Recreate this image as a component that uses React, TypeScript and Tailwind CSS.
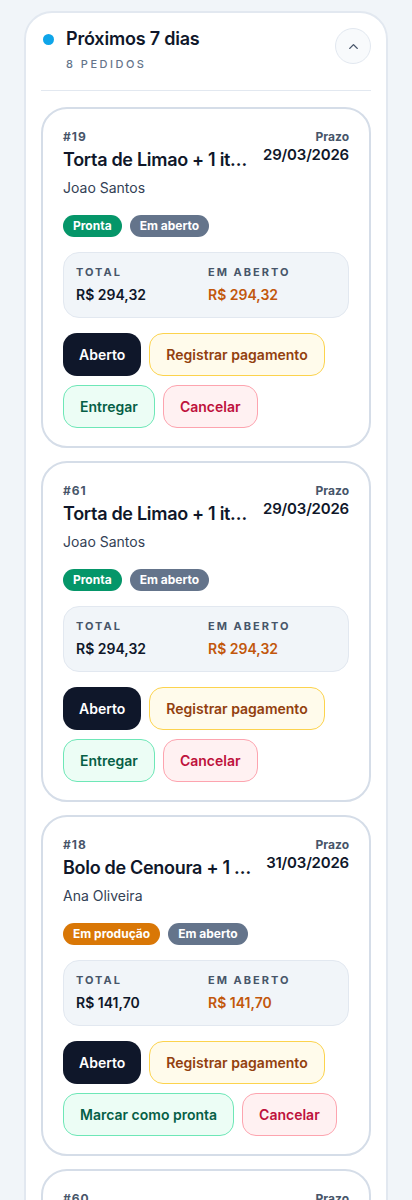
import { ChevronUp } from 'lucide-react'

type Pedido = {
  id: number
  titulo: string
  cliente: string
  prazo: string
  status: 'Pronta' | 'Em produção'
  total: string
  emAberto: string
}

const pedidos: Pedido[] = [
  { id: 19, titulo: 'Torta de Limao + 1 item', cliente: 'Joao Santos', prazo: '29/03/2026', status: 'Pronta', total: 'R$ 294,32', emAberto: 'R$ 294,32' },
  { id: 61, titulo: 'Torta de Limao + 1 item', cliente: 'Joao Santos', prazo: '29/03/2026', status: 'Pronta', total: 'R$ 294,32', emAberto: 'R$ 294,32' },
  { id: 18, titulo: 'Bolo de Cenoura + 1 item', cliente: 'Ana Oliveira', prazo: '31/03/2026', status: 'Em produção', total: 'R$ 141,70', emAberto: 'R$ 141,70' },
  { id: 60, titulo: 'Bolo de Chocolate + 2 itens', cliente: 'Maria Souza', prazo: '01/04/2026', status: 'Em produção', total: 'R$ 98,00', emAberto: 'R$ 98,00' },
]

function PedidoCard({ pedido }: { pedido: Pedido }) {
  const pronta = pedido.status === 'Pronta'

  return (
    <div className="rounded-[26px] border-2 border-[#d5dde8] bg-white px-5 pt-5 pb-[18px]">
      {/* Cabecalho */}
      <div className="flex items-start gap-3">
        <div className="min-w-0 flex-1">
          <div className="text-[12px] font-bold leading-4 tracking-[1px] text-[#475569]">#{pedido.id}</div>
          <div className="mt-[3px] truncate text-[18px] font-semibold leading-6 tracking-[-0.3px] text-[#0f172a]">
            {pedido.titulo}
          </div>
        </div>
        <div className="shrink-0 text-right">
          <div className="text-[12px] font-bold leading-4 text-[#475569]">Prazo</div>
          <div className="text-[15px] font-semibold leading-5 tracking-[-0.2px] text-[#0f172a]">{pedido.prazo}</div>
        </div>
      </div>

      <div className="mt-[6px] text-[14px] leading-5 text-[#334155]">{pedido.cliente}</div>

      {/* Status */}
      <div className="mt-[17px] flex gap-2">
        <span
          className={
            pronta
              ? 'rounded-full bg-[#059669] px-[10px] text-[12px] font-bold leading-[22px] text-white'
              : 'rounded-full bg-[#d97706] px-[10px] text-[12px] font-bold leading-[22px] text-white'
          }
        >
          {pedido.status}
        </span>
        <span className="rounded-full bg-[#64748b] px-[10px] text-[12px] font-bold leading-[22px] text-white">
          Em aberto
        </span>
      </div>

      {/* Resumo */}
      <div className="mt-[15px] grid grid-cols-2 rounded-[16px] border border-[#e2e8f0] bg-[#f1f5f9] px-3 pt-[11px] pb-[12px]">
        <div>
          <div className="text-[11px] font-bold leading-4 tracking-[2px] text-[#475569]">TOTAL</div>
          <div className="mt-[5px] text-[14px] font-semibold leading-5 text-[#0f172a]">{pedido.total}</div>
        </div>
        <div className="pl-[2px]">
          <div className="text-[11px] font-bold leading-4 tracking-[2px] text-[#475569]">EM ABERTO</div>
          <div className="mt-[5px] text-[14px] font-semibold leading-5 text-[#c2570c]">{pedido.emAberto}</div>
        </div>
      </div>

      {/* Acoes */}
      <div className="mt-[15px] flex flex-wrap gap-x-2 gap-y-[9px]">
        <button className="h-[43px] rounded-[14px] bg-[#0f172a] px-4 text-[14px] font-semibold text-white">
          Aberto
        </button>
        <button className="h-[43px] rounded-[14px] border border-[#fcd34d] bg-[#fffbeb] px-4 text-[14px] font-semibold text-[#92400e]">
          Registrar pagamento
        </button>
        <button className="h-[43px] rounded-[14px] border border-[#6ee7b7] bg-[#ecfdf5] px-4 text-[14px] font-semibold text-[#065f46]">
          {pronta ? 'Entregar' : 'Marcar como pronta'}
        </button>
        <button className="h-[43px] rounded-[14px] border border-[#fda4af] bg-[#fff1f2] px-4 text-[14px] font-semibold text-[#be123c]">
          Cancelar
        </button>
      </div>
    </div>
  )
}

export default function App() {
  return (
    <div className="min-h-[1200px] bg-[#f1f5f9] px-6 pt-[11px] font-['Inter',sans-serif]">
      <section className="rounded-[28px] border-2 border-[#e2e8f0] bg-white px-[15px] pt-[14px] pb-4">
        {/* Cabecalho da secao */}
        <div className="flex items-start justify-between pl-[2px]">
          <div className="flex items-start gap-3">
            <span className="mt-[7px] h-[11px] w-[11px] rounded-full bg-[#0ea5e9]" />
            <div>
              <h2 className="text-[18px] font-semibold leading-6 tracking-[-0.2px] text-[#0f172a]">Próximos 7 dias</h2>
              <div className="mt-[5px] text-[11px] font-medium leading-4 tracking-[2.5px] text-[#64748b]">8 PEDIDOS</div>
            </div>
          </div>
          <button className="mt-[1px] flex h-9 w-9 items-center justify-center rounded-full border border-[#e2e8f0] bg-[#f8fafc] text-[#475569]">
            <ChevronUp size={15} strokeWidth={2.25} />
          </button>
        </div>

        <div className="mt-[18px] mb-4 h-px bg-[#e2e8f0]" />

        <div className="flex flex-col gap-[13px]">
          {pedidos.map((p) => (
            <PedidoCard key={p.id} pedido={p} />
          ))}
        </div>
      </section>
    </div>
  )
}
